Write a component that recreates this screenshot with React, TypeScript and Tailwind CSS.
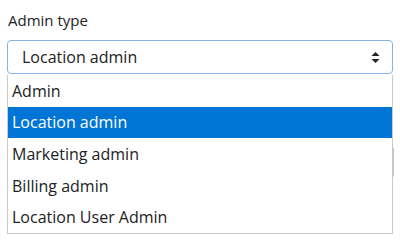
import React from 'react'

const options = ['Admin', 'Location admin', 'Marketing admin', 'Billing admin', 'Location User Admin']

// ── Up/down caret used by the select ─────────────────────────────────────────
const Caret = () => (
  <svg width="9" height="13" viewBox="0 0 9 13" className="shrink-0">
    <path d="M4.5 1 L8.5 5 L0.5 5 Z" fill="#222" />
    <path d="M0.5 8 L8.5 8 L4.5 12 Z" fill="#222" />
  </svg>
)

const App = () => {
  const selected = 'Location admin'

  return (
    <div
      className="relative w-[400px] h-[240px] overflow-hidden bg-white text-[#333]"
      style={{ fontFamily: '"Open Sans", "Noto Sans", sans-serif' }}
    >
      <div className="pl-[7px] pr-[7px] pt-[10px]">
        <label className="block pl-[1px] text-[15px] leading-[20px] text-[#222]">Admin type</label>

        {/* Select (focused) */}
        <div className="mt-[10px] h-[34px] w-[386px] rounded-[4px] border border-[#86b3e6] flex items-center justify-between pl-[14px] pr-[12px]">
          <span className="text-[16px] text-[#222]">{selected}</span>
          <Caret />
        </div>

        {/* Field behind the open list */}
        <div className="mt-[72px] h-[32px] w-[387px] rounded-[3px] border border-[#c4c4c4]" />
      </div>

      {/* Open option list */}
      <ul className="absolute left-[7px] top-[75px] w-[386px] border border-t-0 border-[#c9c9c9] bg-white">
        {options.map(o => (
          <li
            key={o}
            className={
              o === selected
                ? 'h-[31.6px] flex items-center pl-[4px] text-[16px] bg-[#0075d6] text-white'
                : 'h-[31.6px] flex items-center pl-[4px] text-[16px] text-[#222]'
            }
          >
            {o}
          </li>
        ))}
      </ul>
    </div>
  )
}

export default App
